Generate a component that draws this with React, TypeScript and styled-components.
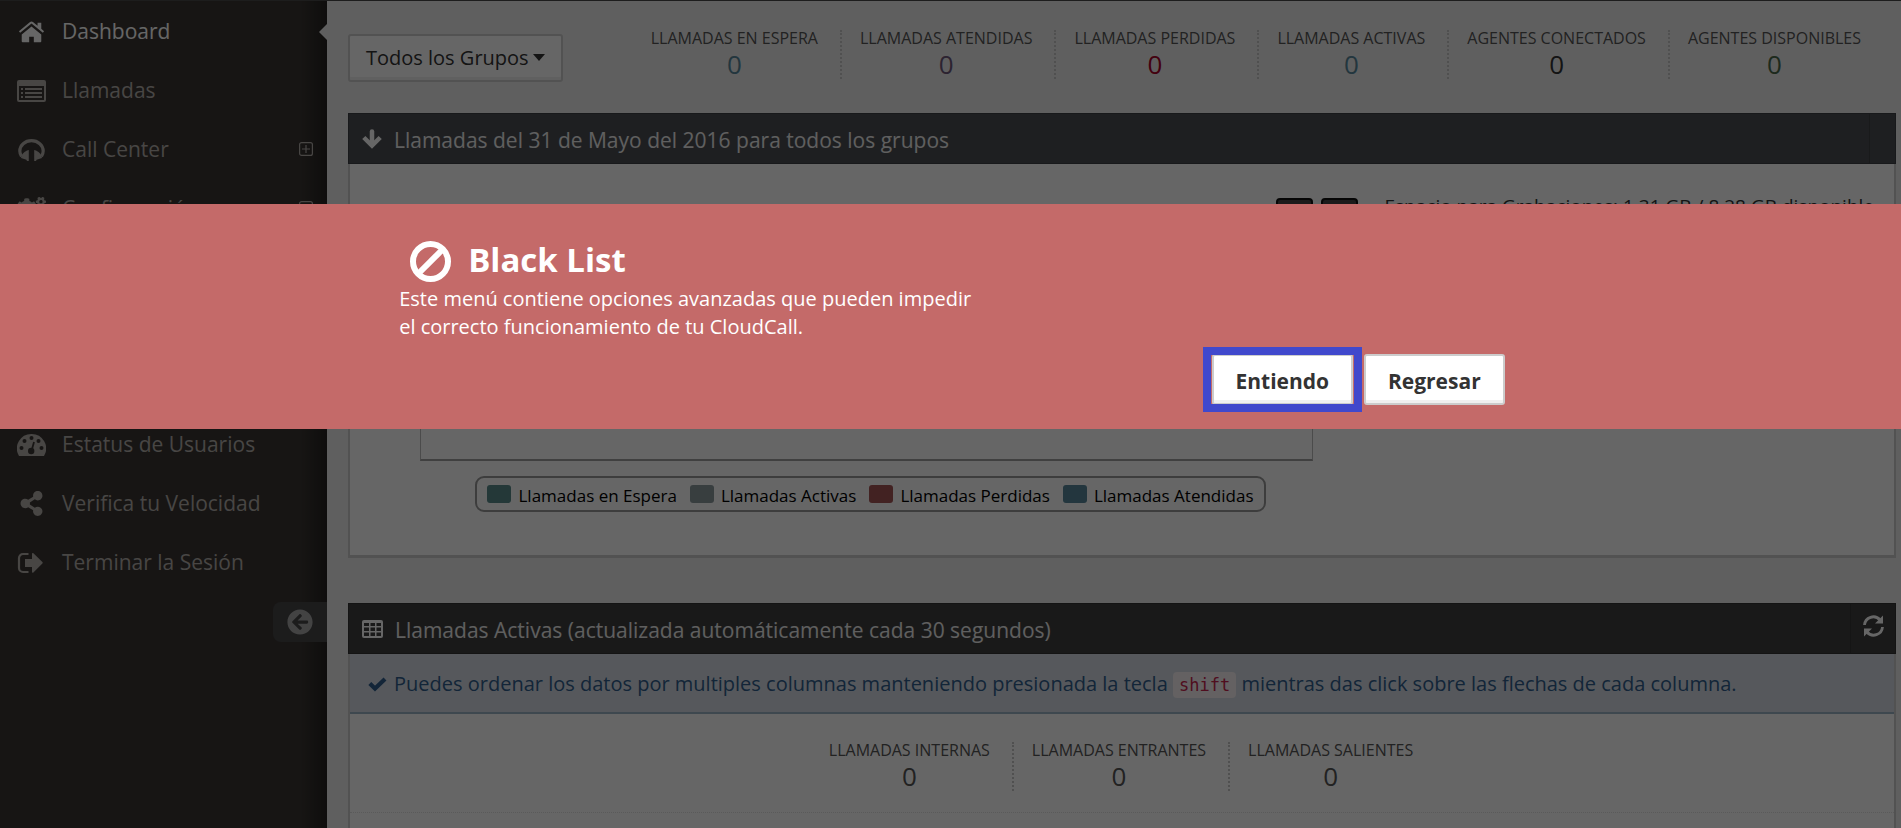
import React from "react";
import styled, { createGlobalStyle, css } from "styled-components";
import { FaCogs, FaShareAlt, FaArrowCircleLeft } from "react-icons/fa";

const Global = createGlobalStyle`
  *, *::before, *::after { box-sizing: border-box; }
  html, body, #root { height: 100%; }
  body {
    margin: 0;
    overflow: hidden;
    background: #eee;
    color: #333;
    font-family: "Open Sans", Arial, sans-serif;
    font-size: 20px;
  }
  button { font-family: inherit; cursor: pointer; }
`;

const Shell = styled.div`
  display: flex;
  min-height: 100%;
  border-top: 1px solid #4a4a4a;
`;

const Sidebar = styled.aside`
  flex: 0 0 327px;
  background: linear-gradient(to right, transparent 300px, rgba(0, 0, 0, 0.35)), #3a3633;
`;

const Menu = styled.ul`
  list-style: none;
  margin: 0;
  padding: 0;
`;

const MenuLink = styled.a<{ $active?: boolean }>`
  position: relative;
  display: flex;
  align-items: center;
  height: 59px;
  padding: 0 14px 0 17px;
  gap: 16px;
  font-size: 21px;
  line-height: 28px;
  text-decoration: none;
  color: ${(p) => (p.$active ? "#fff" : "#b3aeab")};
  ${(p) =>
    p.$active &&
    css`
      &::after {
        content: "";
        position: absolute;
        right: 0;
        top: 23px;
        border: 8px solid transparent;
        border-left: 0;
        border-right-color: #eee;
      }
    `}
`;

const MenuIcon = styled.span`
  display: flex;
  flex: 0 0 29px;
  justify-content: center;
  padding-top: 2px;
`;

const MenuText = styled.span`
  flex: 1;
`;

const Collapse = styled.button`
  display: flex;
  align-items: center;
  justify-content: center;
  width: 54px;
  height: 40px;
  margin: 11px 0 0 auto;
  border: 0;
  border-radius: 8px 0 0 8px;
  background: #464648;
  color: #a8a8a8;
`;

const Main = styled.main`
  flex: 1;
  min-width: 0;
  padding: 0 5px 0 21px;
`;

const TopBar = styled.div`
  display: flex;
  justify-content: space-between;
  align-items: flex-start;
  height: 112px;
  padding: 29px 13px 0 0;
`;

const GroupButton = styled.button`
  display: flex;
  align-items: center;
  gap: 4px;
  height: 48px;
  margin-top: 4px;
  padding: 0 16px 2px;
  border: 2px solid #ccc;
  border-radius: 3px;
  background: #fff;
  box-shadow: inset 0 -3px 0 #f0f0f0;
  color: #333;
  font-size: 20px;
`;

const Caret = styled.i`
  border: 6px solid transparent;
  border-top: 7px solid currentColor;
  border-bottom: 0;
`;

const Stats = styled.ul`
  display: flex;
  list-style: none;
  margin: 0;
  padding: 0;
`;

const Stat = styled.li<{ $color: string }>`
  height: 49px;
  padding: 0 22px 0 18px;
  border-left: 2px dotted #c8c8c8;
  text-align: center;
  font-size: 16px;
  line-height: 16px;
  text-transform: uppercase;
  white-space: nowrap;
  color: #555;
  &:first-child { border-left-color: transparent; }
  strong {
    display: block;
    font-size: 26px;
    font-weight: 400;
    line-height: 36px;
    color: ${(p) => p.$color};
  }
`;

const Panel = styled.section`
  margin-bottom: 45px;
`;

const PanelHeader = styled.header<{ $bg: string }>`
  display: flex;
  align-items: center;
  height: 51px;
  padding-left: 13px;
  gap: 12px;
  border: 1px solid rgba(0, 0, 0, 0.18);
  background: ${(p) => p.$bg};
  color: #fff;
  h2 {
    flex: 1;
    margin: 0;
    font-size: 21px;
    font-weight: 400;
    line-height: 30px;
    padding-top: 2px;
    color: #eee;
  }
`;

const HeaderAction = styled.div<{ $width: number }>`
  display: flex;
  align-items: center;
  justify-content: center;
  width: ${(p) => p.$width}px;
  height: 49px;
  border-left: 1px solid rgba(0, 0, 0, 0.16);
`;

const IconButton = styled.button`
  display: flex;
  padding: 0 0 6px;
  border: 0;
  background: none;
  color: inherit;
`;

const PanelBody = styled.div`
  border: 2px solid #ccc;
  border-top: 0;
  border-bottom-width: 3px;
  background: #fff;
`;

const ChartArea = styled.div`
  display: grid;
  align-items: start;
  height: 391px;
  padding: 32px 20px 0 70px;
  > * { grid-area: 1 / 1; }
`;

const Chart = styled.div`
  display: flex;
  flex-direction: column;
  align-items: center;
  width: 893px;
`;

const ChartTitle = styled.h3`
  margin: 0;
  font-size: 20px;
  font-weight: 700;
  line-height: 32px;
  color: #333;
`;

const Plot = styled.div`
  width: 100%;
  height: 233px;
  border: 1px solid #bbb;
  border-bottom: 2px solid #a0a0a0;
`;

const Legend = styled.ul`
  display: flex;
  align-items: center;
  list-style: none;
  height: 36px;
  margin: 15px 0 0 8px;
  padding: 0 10px;
  gap: 13px;
  border: 2px solid #9a9a9a;
  border-radius: 9px;
  color: #000;
  font-family: "Trebuchet MS", "Open Sans", sans-serif;
  font-size: 17px;
  line-height: 24px;
  white-space: nowrap;
  li {
    display: flex;
    align-items: center;
    gap: 7px;
    padding-top: 4px;
  }
`;

const Swatch = styled.span<{ $color: string }>`
  width: 24px;
  height: 18px;
  margin-bottom: 5px;
  border-radius: 3px;
  background: ${(p) => p.$color};
`;

const Tools = styled.div`
  display: flex;
  justify-self: end;
  gap: 8px;
  font-size: 19px;
  line-height: 28px;
  color: #333;
  white-space: nowrap;
  span { margin: -4px 0 0 18px; }
`;

const ToolButton = styled.button`
  width: 37px;
  height: 36px;
  margin-top: 2px;
  border: 2px solid #111;
  border-radius: 4px;
  background: #444;
  color: #fff;
`;

const Info = styled.p`
  display: flex;
  align-items: center;
  gap: 7px;
  height: 60px;
  margin: 0;
  padding: 2px 18px 0;
  border-bottom: 2px solid #9cb4c5;
  background: #d6dde7;
  color: #305d8c;
  font-size: 20px;
  line-height: 28px;
  code {
    padding: 3px 6px;
    border-radius: 4px;
    background: #f9f2f4;
    color: #c7254e;
    font-family: "DejaVu Sans Mono", monospace;
    font-size: 17px;
  }
`;

const CallSummary = styled.div`
  display: flex;
  justify-content: center;
  height: 99px;
  padding-top: 28px;
  border-bottom: 1px dotted #e0e0e0;
`;

const TableSpace = styled.div`
  height: 120px;
`;

const Backdrop = styled.div`
  position: fixed;
  inset: 0;
  background: rgba(0, 0, 0, 0.6);
`;

const Dialog = styled.div`
  position: absolute;
  top: 204px;
  left: 0;
  right: 0;
  padding: 34px 20% 24px;
  background: #c46a69;
  color: #fff;
`;

const DialogInner = styled.div`
  padding: 0 16px 0 19px;
`;

const DialogTitle = styled.h1`
  display: flex;
  align-items: center;
  gap: 17px;
  height: 47px;
  margin: 0;
  padding-left: 11px;
  font-size: 33px;
  font-weight: 700;
  line-height: 44px;
  span { padding-bottom: 4px; }
`;

const DialogText = styled.p`
  margin: 0;
  font-size: 20px;
  line-height: 28px;
`;

const DialogActions = styled.div`
  display: flex;
  justify-content: flex-end;
  gap: 11px;
  margin-top: 13px;
`;

const DialogButton = styled.button<{ $marked?: boolean }>`
  position: relative;
  height: 51px;
  min-width: 141px;
  padding: 2px 20px 0;
  border: 2px solid #ccc;
  border-radius: 3px;
  background: #fff;
  box-shadow: inset 0 -3px 0 #f0f0f0;
  color: #333;
  font-size: 21px;
  font-weight: 700;
  ${(p) =>
    p.$marked &&
    css`
      &::after {
        content: "";
        position: absolute;
        inset: -9px -11px;
        border: 8px solid #4048cc;
      }
    `}
`;

const HomeIcon = () => (
  <svg width="27" height="24" viewBox="0 0 29 24" fill="currentColor">
    <path d="M14.500 6 4 14.600V22a1 1 0 0 0 1 1h7v-6h5v6h7a1 1 0 0 0 1-1v-7.400z" />
    <path d="M28 11.200 25 8.600V2h-4v3.200l-4.600-3.700a3 3 0 0 0-3.800 0L1 11.200l1.300 1.600L14.500 3l12.200 9.800z" />
  </svg>
);

const ListIcon = () => (
  <svg width="29" height="22" viewBox="0 0 29 22" fill="currentColor">
    <path fillRule="evenodd" d="M2 0h25a2 2 0 0 1 2 2v18a2 2 0 0 1-2 2H2a2 2 0 0 1-2-2V2a2 2 0 0 1 2-2zM2 6v14h25V6z" />
    <path d="M4 8h2v2H4zm4 0h17v2H8zM4 12h2v2H4zm4 0h17v2H8zM4 16h2v2H4zm4 0h17v2H8z" />
  </svg>
);

const HeadphonesIcon = () => (
  <svg width="27" height="22" viewBox="0 0 27 22">
    <path d="M3.500 17.500A10.500 10.500 0 0 1 1.800 12C1.800 6.200 7 1.700 13.500 1.700s11.700 4.500 11.700 10.300a10.500 10.500 0 0 1-1.700 5.500" fill="none" stroke="currentColor" strokeWidth="3.200" />
    <path fill="currentColor" d="M10.800 11v11H9l-.6-1.200L3 19c.3-3 2.200-6 6-7.500zM16.200 11v11H18l.6-1.200L24 19c-.3-3-2.200-6-6-7.500z" />
  </svg>
);

const GaugeIcon = () => (
  <svg width="29" height="22" viewBox="0 0 29 22">
    <path fill="currentColor" d="M14.500 0A14.500 14.500 0 0 0 2 22h25A14.500 14.500 0 0 0 14.500 0z" />
    <g fill="#3a3633">
      <circle cx="4.500" cy="14" r="2" /><circle cx="7.500" cy="7" r="2" />
      <circle cx="14.500" cy="4" r="2" /><circle cx="21.500" cy="7" r="2" />
      <circle cx="24.500" cy="14" r="2" /><circle cx="14.200" cy="17" r="3.200" />
    </g>
    <path d="M14.500 17 17 8" stroke="#3a3633" strokeWidth="1.800" />
  </svg>
);

const ExitIcon = () => (
  <svg width="29" height="22" viewBox="0 0 29 22">
    <path d="M11.500 2H6a4 4 0 0 0-4 4v10a4 4 0 0 0 4 4h5.500" fill="none" stroke="currentColor" strokeWidth="2.200" />
    <path fill="currentColor" d="M8 7h7V1.800c0-.8.8-1 1.400-.5l9 8.800c.5.500.5 1 0 1.500l-9 8.800c-.6.600-1.400.400-1.400-.4V15H8z" />
  </svg>
);

const PlusBox = () => (
  <svg width="14" height="14" viewBox="0 0 14 14" fill="none" stroke="currentColor" strokeWidth="1.200">
    <rect x=".6" y=".6" width="12.800" height="12.800" rx="2" />
    <path d="M7 3v8M3 7h8" />
  </svg>
);

const DownIcon = () => (
  <svg width="20" height="20" viewBox="0 0 20 20" fill="none" stroke="currentColor" strokeWidth="4.500">
    <path d="M10 2.500v12" strokeLinecap="round" />
    <path d="m1.800 8.500 8.200 8 8.200-8" />
  </svg>
);

const GridIcon = () => (
  <svg width="21" height="18" viewBox="0 0 21 18">
    <rect width="21" height="18" rx="2" fill="currentColor" />
    <path fill="#404040" d="M2 3h5v3H2zm6.500 0h4.500v3H8.500zM14.500 3H19v3h-4.500zM2 7.500h5v3.500H2zm6.500 0h4.500V11H8.500zm6 0H19V11h-4.500zM2 12.500h5v3.500H2zm6.500 0h4.500V16H8.500zm6 0H19V16h-4.500z" />
  </svg>
);

const RefreshIcon = () => (
  <svg width="21" height="22" viewBox="0 0 21 22">
    <g fill="none" stroke="currentColor" strokeWidth="2.800">
      <path d="M1.500 10A8.800 8.800 0 0 1 17 5" />
      <path d="M19.500 12A8.800 8.800 0 0 1 4 17" />
    </g>
    <path fill="currentColor" d="M20 .5v8h-8zM1 21.500v-8h8z" />
  </svg>
);

const CheckIcon = () => (
  <svg width="19" height="15" viewBox="0 0 19 15" fill="none" stroke="currentColor" strokeWidth="4.200">
    <path d="m1.800 6.500 5.200 5L17 2" />
  </svg>
);

const BanIcon = () => (
  <svg width="41" height="41" viewBox="0 0 41 41" fill="none" stroke="currentColor" strokeWidth="6">
    <circle cx="20.500" cy="20.500" r="17.500" />
    <path d="M8.500 32.500 32.500 8.500" />
  </svg>
);

type Item = { text: string; icon: React.ReactNode; active?: boolean; expandable?: boolean };

const menu: Item[] = [
  { text: "Dashboard", icon: <HomeIcon />, active: true },
  { text: "Llamadas", icon: <ListIcon /> },
  { text: "Call Center", icon: <HeadphonesIcon />, expandable: true },
  { text: "Configuración", icon: <FaCogs size={29} />, expandable: true },
  { text: "Avanzado", icon: <FaCogs size={29} />, expandable: true },
  { text: "Reportes", icon: <ListIcon /> },
  { text: "Agentes", icon: <HeadphonesIcon /> },
  { text: "Estatus de Usuarios", icon: <GaugeIcon /> },
  { text: "Verifica tu Velocidad", icon: <FaShareAlt size={25} /> },
  { text: "Terminar la Sesión", icon: <ExitIcon /> },
];

const topStats = [
  ["Llamadas en espera", "#57889c"],
  ["Llamadas atendidas", "#6e587a"],
  ["Llamadas perdidas", "#a90329"],
  ["Llamadas activas", "#57889c"],
  ["Agentes conectados", "#333"],
  ["Agentes disponibles", "#496949"],
];

const callStats = [
  ["Llamadas internas", "#555"],
  ["Llamadas entrantes", "#555"],
  ["Llamadas salientes", "#555"],
];

const series = [
  ["Llamadas en Espera", "#5a8c8c"],
  ["Llamadas Activas", "#8c9c9f"],
  ["Llamadas Perdidas", "#a65555"],
  ["Llamadas Atendidas", "#57889c"],
];

const StatList = ({ items }: { items: string[][] }) => (
  <Stats>
    {items.map(([label, color]) => (
      <Stat key={label} $color={color}>
        {label}
        <strong>0</strong>
      </Stat>
    ))}
  </Stats>
);

export default function App() {
  return (
    <>
      <Global />
      <Shell>
        <Sidebar>
          <nav>
            <Menu>
              {menu.map((m) => (
                <li key={m.text}>
                  <MenuLink href="#" $active={m.active}>
                    <MenuIcon>{m.icon}</MenuIcon>
                    <MenuText>{m.text}</MenuText>
                    {m.expandable && <PlusBox />}
                  </MenuLink>
                </li>
              ))}
            </Menu>
          </nav>
          <Collapse aria-label="Contraer menú">
            <FaArrowCircleLeft size={26} />
          </Collapse>
        </Sidebar>
        <Main>
          <TopBar>
            <GroupButton>
              Todos los Grupos
              <Caret />
            </GroupButton>
            <StatList items={topStats} />
          </TopBar>
          <Panel>
            <PanelHeader $bg="#4c4f53">
              <DownIcon />
              <h2>Llamadas del 31 de Mayo del 2016 para todos los grupos</h2>
              <HeaderAction $width={26} />
            </PanelHeader>
            <PanelBody>
              <ChartArea>
                <Chart>
                  <ChartTitle>Total de Llamadas por Hora</ChartTitle>
                  <Plot />
                  <Legend>
                    {series.map(([label, color]) => (
                      <li key={label}>
                        <Swatch $color={color} />
                        {label}
                      </li>
                    ))}
                  </Legend>
                </Chart>
                <Tools>
                  <ToolButton aria-label="Acercar" />
                  <ToolButton aria-label="Alejar" />
                  <span>Espacio para Grabaciones: 1.31 GB / 8.28 GB disponible</span>
                </Tools>
              </ChartArea>
            </PanelBody>
          </Panel>
          <Panel>
            <PanelHeader $bg="#404040">
              <GridIcon />
              <h2>Llamadas Activas (actualizada automáticamente cada 30 segundos)</h2>
              <HeaderAction $width={45}>
                <IconButton aria-label="Actualizar">
                  <RefreshIcon />
                </IconButton>
              </HeaderAction>
            </PanelHeader>
            <PanelBody>
              <Info>
                <CheckIcon />
                <span>
                  Puedes ordenar los datos por multiples columnas manteniendo presionada la tecla <code>shift</code>{" "}
                  mientras das click sobre las flechas de cada columna.
                </span>
              </Info>
              <CallSummary>
                <StatList items={callStats} />
              </CallSummary>
              <TableSpace />
            </PanelBody>
          </Panel>
        </Main>
      </Shell>
      <Backdrop>
        <Dialog role="dialog" aria-labelledby="dialog-title">
          <DialogInner>
            <DialogTitle id="dialog-title">
              <BanIcon />
              <span>Black List</span>
            </DialogTitle>
            <DialogText>
              Este menú contiene opciones avanzadas que pueden impedir
              <br />
              el correcto funcionamiento de tu CloudCall.
            </DialogText>
            <DialogActions>
              <DialogButton $marked>Entiendo</DialogButton>
              <DialogButton>Regresar</DialogButton>
            </DialogActions>
          </DialogInner>
        </Dialog>
      </Backdrop>
    </>
  );
}
